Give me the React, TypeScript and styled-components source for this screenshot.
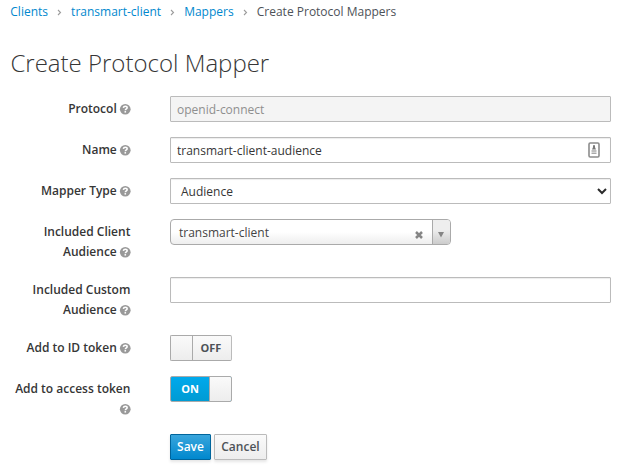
import React from 'react';
import styled, { createGlobalStyle, css } from 'styled-components';

const GlobalStyle = createGlobalStyle`
  *, *::before, *::after { box-sizing: border-box; }
  body {
    margin: 0;
    background: #fff;
    color: #4d5258;
    font: 12px/20px "Open Sans", "Liberation Sans", sans-serif;
  }
`;

const Page = styled.main`
  width: 621px;
  height: 471px;
  overflow: hidden;
  padding: 2px 10px 0;
`;

const Breadcrumb = styled.ol`
  display: flex;
  height: 20px;
  margin: 0;
  padding: 0 0 0 0.3px;
  list-style: none;
`;

const Crumb = styled.li`
  display: flex;
  white-space: nowrap;
`;

const CrumbLink = styled.a`
  color: #0088ce;
  text-decoration: none;
`;

const CrumbArrow = styled.svg`
  width: 5px;
  height: 7px;
  margin: 7px 9.1px 0 9px;
  fill: none;
  stroke: #9c9c9c;
  stroke-width: 1.1;
`;

const Title = styled.h1`
  margin: 28px 0 20px;
  padding-left: 0.4px;
  font-size: 24px;
  font-weight: 300;
  line-height: 26px;
  color: #363636;
`;

const Form = styled.form`
  display: flex;
  flex-direction: column;
  gap: 15px;
`;

const Row = styled.div`
  display: grid;
  grid-template-columns: 120.4px 441px;
  column-gap: 39.6px;
  align-items: start;
`;

const Label = styled.label`
  padding-top: 3px;
  text-align: right;
  font-weight: 600;
  color: #363636;
`;

const HelpSvg = styled.svg`
  width: 10.5px;
  height: 10.5px;
  vertical-align: -1px;
  overflow: visible;
`;

const field = css`
  width: 100%;
  height: 26px;
  padding: 2px 6px;
  border: 1px solid #bbb;
  border-radius: 1px;
  background: #fff;
  color: #363636;
  font: 12px/20px "Open Sans", "Liberation Sans", sans-serif;
  box-shadow: inset 0 1px 1px rgba(0, 0, 0, 0.075);
  outline: none;
`;

const Input = styled.input`
  ${field}
  &:disabled {
    background: #f4f4f4;
    color: #8f8f8f;
    box-shadow: none;
  }
`;

const InputShell = styled.div`
  ${field}
  display: flex;
  align-items: center;
  justify-content: space-between;
  padding-right: 10px;
`;

const BareInput = styled.input`
  flex: 1;
  min-width: 0;
  height: 20px;
  margin-top: 2px;
  padding: 0;
  border: 0;
  outline: 0;
  background: transparent;
  color: inherit;
  font: inherit;
`;

const SelectBox = styled.div`
  ${field}
  display: flex;
  justify-content: space-between;
  padding: 3px 3px 1px 10px;
`;

const SelectArrow = styled.svg`
  width: 10px;
  height: 18px;
`;

const Combo = styled.div`
  display: flex;
  width: 281px;
  height: 26px;
  border: 1px solid #aaa;
  border-radius: 4px;
  overflow: hidden;
  background: linear-gradient(to top, #eee 0%, #fff 50%);
  color: #444;
`;

const ComboText = styled.span`
  flex: 1;
  padding: 3px 0 0 8px;
`;

const ComboClear = styled.svg`
  width: 8px;
  height: 8px;
  margin: 11px 9px 0 0;
`;

const ComboArrow = styled.span`
  width: 18px;
  border-left: 1px solid #aaa;
  background: linear-gradient(to top, #ccc 0%, #eee 60%);
  display: flex;
  justify-content: center;
  padding: 12px 1px 0 0;
`;

const Toggle = styled.button<{ $on: boolean }>`
  display: flex;
  flex-direction: ${p => (p.$on ? 'row-reverse' : 'row')};
  width: 62px;
  height: 26px;
  padding: 0;
  border: 1px solid #aaa;
  border-color: ${p => (p.$on ? '#aaa' : '#aaa #bbb #aaa #aaa')};
  border-radius: 2px;
  overflow: hidden;
  background: ${p =>
    p.$on ? 'linear-gradient(#00a9ec, #009bd3)' : 'linear-gradient(#fafafa, #ededed)'};
  color: ${p => (p.$on ? '#fff' : '#4d5258')};
  font: 700 11px/24px "Open Sans", "Liberation Sans", sans-serif;
`;

const ToggleKnob = styled.span<{ $on: boolean }>`
  width: 22px;
  height: 24px;
  border-style: solid;
  border-color: #aaa;
  border-width: ${p => (p.$on ? '0 0 0 1px' : '0 1px 0 0')};
  background: linear-gradient(#fafafa, #ededed);
`;

const ToggleText = styled.span<{ $on: boolean }>`
  flex: 1;
  padding-right: ${p => (p.$on ? 0 : 2)}px;
  text-align: center;
`;

const Actions = styled.div`
  grid-column: 2;
  display: flex;
  gap: 3px;
`;

const Button = styled.button<{ $primary?: boolean }>`
  width: ${p => (p.$primary ? 41 : 53)}px;
  height: 26px;
  padding: 0;
  border: 1px solid ${p => (p.$primary ? '#00659c' : '#bbb')};
  border-radius: 1px;
  background: ${p =>
    p.$primary ? 'linear-gradient(#39a5dc, #0088ce)' : 'linear-gradient(#fafafa, #ededed)'};
  color: ${p => (p.$primary ? '#fff' : '#4d5258')};
  font: 600 12px/22px "Open Sans", "Liberation Sans", sans-serif;
  box-shadow: 0 2px 3px rgba(3, 3, 3, 0.1);
`;

const HelpIcon = () => (
  <HelpSvg viewBox="0 0 10 10" aria-hidden="true">
    <circle cx="5" cy="5" r="5.1" fill="#999" />
    <path
      d="M3.2 3.7C3.4 2.6 4.1 2.1 5 2.1s1.8.5 1.8 1.5c0 1.1-1.7 1.1-1.7 2.4"
      fill="none"
      stroke="#fff"
      strokeWidth="1.5"
    />
    <path d="M4.3 6.7h1.5v1.5H4.3z" fill="#fff" />
  </HelpSvg>
);

const Field = ({ label, children }: { label: string; children: React.ReactNode }) => (
  <Row>
    <Label>
      {label} <HelpIcon />
    </Label>
    {children}
  </Row>
);

const Switch = ({ on }: { on: boolean }) => (
  <Toggle type="button" role="switch" aria-checked={on} $on={on}>
    <ToggleKnob $on={on} />
    <ToggleText $on={on}>{on ? 'ON' : 'OFF'}</ToggleText>
  </Toggle>
);

const links = ['Clients', 'transmart-client', 'Mappers'];

export default function App() {
  return (
    <Page>
      <GlobalStyle />
      <Breadcrumb>
        {links.map(text => (
          <Crumb key={text}>
            <CrumbLink href="#">{text}</CrumbLink>
            <CrumbArrow viewBox="0 0 5 7">
              <path d="M1 1l2.5 2.5L1 6" />
            </CrumbArrow>
          </Crumb>
        ))}
        <Crumb>Create Protocol Mappers</Crumb>
      </Breadcrumb>
      <Title>Create Protocol Mapper</Title>
      <Form>
        <Field label="Protocol">
          <Input disabled defaultValue="openid-connect" />
        </Field>
        <Field label="Name">
          <InputShell>
            <BareInput defaultValue="transmart-client-audience" />
            <svg width="12" height="16" viewBox="0 0 12 16">
              <rect x="1" y="1" width="10" height="14" rx="1.2" fill="#fff" stroke="#8c8c8c" strokeWidth="1.6" />
              <path d="M5 3.2h2v2l1 2.3H4l1-2.3z" fill="#777" />
              <path d="M3.5 9h5M3.5 11.3h5" stroke="#aaa" strokeWidth="1.5" />
            </svg>
          </InputShell>
        </Field>
        <Field label="Mapper Type">
          <SelectBox role="combobox">
            Audience
            <SelectArrow viewBox="0 0 10 18">
              <path d="M1 7l4 4 4-4" fill="none" stroke="#2b2b2b" strokeWidth="2" />
            </SelectArrow>
          </SelectBox>
        </Field>
        <Field label="Included Client Audience">
          <Combo role="combobox">
            <ComboText>transmart-client</ComboText>
            <ComboClear viewBox="0 0 8 8">
              <path d="M1 1l6 6M7 1L1 7" stroke="#858585" strokeWidth="2.5" />
            </ComboClear>
            <ComboArrow>
              <svg width="6" height="6" viewBox="0 0 6 6">
                <path d="M0 0h6L3 5.5z" fill="#858585" />
              </svg>
            </ComboArrow>
          </Combo>
        </Field>
        <Field label="Included Custom Audience">
          <Input />
        </Field>
        <Field label="Add to ID token">
          <Switch on={false} />
        </Field>
        <Field label="Add to access token">
          <Switch on />
        </Field>
        <Row>
          <Actions>
            <Button type="button" $primary>
              Save
            </Button>
            <Button type="button">Cancel</Button>
          </Actions>
        </Row>
      </Form>
    </Page>
  );
}
